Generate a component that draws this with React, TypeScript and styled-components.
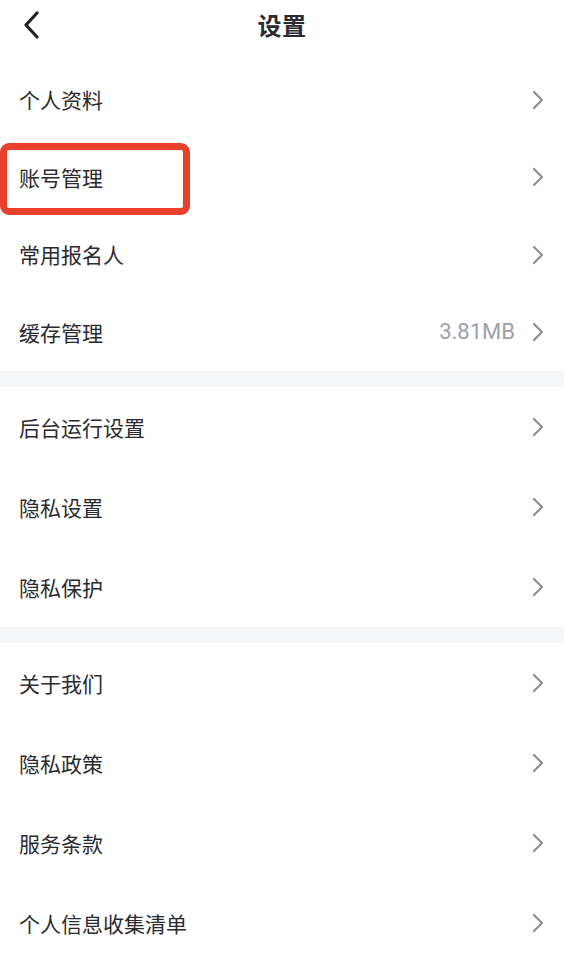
import React from "react";
import styled, { createGlobalStyle } from "styled-components";

const Global = createGlobalStyle`
  html, body { margin: 0; padding: 0; background: #ffffff; }
  body { font-family: "Noto Sans CJK SC", "Noto Sans", "Liberation Sans", sans-serif; -webkit-font-smoothing: antialiased; }
  * { box-sizing: border-box; }
`;

const Page = styled.div`
  width: 564px;
  min-height: 957px;
  background: #ffffff;
  overflow: hidden;
`;

const Header = styled.header`
  height: 50px;
  display: grid;
  grid-template-columns: 60px 1fr 60px;
  align-items: center;
  margin-bottom: 11px;
`;

const BackButton = styled.button`
  border: 0;
  background: none;
  padding: 0 0 0 23px;
  height: 100%;
  display: flex;
  align-items: center;
  cursor: pointer;
`;

const Title = styled.h1`
  margin: 0;
  text-align: center;
  font-size: 24px;
  font-weight: 700;
  color: #2a2a30;
  letter-spacing: 0.5px;
  line-height: 1;
`;

const Group = styled.section`
  display: flex;
  flex-direction: column;
`;

const Divider = styled.div`
  height: 16px;
  background: #f5f6f8;
`;

const Row = styled.div<{ $h: number }>`
  position: relative;
  height: ${(p) => p.$h}px;
  display: flex;
  align-items: center;
  padding: 0 20px 0 19px;
`;

const Label = styled.span`
  flex: 1;
  font-size: 21px;
  font-weight: 400;
  color: #2a2a2f;
  line-height: 1;
`;

const Value = styled.span`
  font-family: "Roboto", "Liberation Sans", sans-serif;
  font-size: 22px;
  font-weight: 400;
  color: #a0a0a8;
  margin-right: 17px;
  line-height: 1;
`;

const Highlight = styled.div`
  position: absolute;
  left: 0;
  top: 4px;
  width: 190px;
  height: 72px;
  border: 7px solid #e9402b;
  border-radius: 9px;
  pointer-events: none;
`;

const Chevron = () => (
  <svg width="12" height="20" viewBox="0 0 12 20" fill="none">
    <path d="M2 2 L10 10 L2 18" stroke="#8d8d9c" strokeWidth="2.2" strokeLinecap="round" strokeLinejoin="round" />
  </svg>
);

const BackIcon = () => (
  <svg width="16" height="28" viewBox="0 0 16 28" fill="none">
    <path d="M14 2 L3 14 L14 26" stroke="#222226" strokeWidth="3.2" strokeLinecap="round" strokeLinejoin="round" />
  </svg>
);

type Item = { label: string; value?: string; highlight?: boolean };

const groups: { h: number; items: Item[] }[] = [
  {
    h: 77.5,
    items: [
      { label: "个人资料" },
      { label: "账号管理", highlight: true },
      { label: "常用报名人" },
      { label: "缓存管理", value: "3.81MB" },
    ],
  },
  {
    h: 80,
    items: [{ label: "后台运行设置" }, { label: "隐私设置" }, { label: "隐私保护" }],
  },
  {
    h: 80,
    items: [
      { label: "关于我们" },
      { label: "隐私政策" },
      { label: "服务条款" },
      { label: "个人信息收集清单" },
    ],
  },
];

export default function App() {
  return (
    <Page>
      <Global />
      <Header>
        <BackButton aria-label="返回">
          <BackIcon />
        </BackButton>
        <Title>设置</Title>
        <span />
      </Header>
      {groups.map((g, gi) => (
        <React.Fragment key={gi}>
          {gi > 0 && <Divider />}
          <Group>
            {g.items.map((it) => (
              <Row key={it.label} $h={g.h}>
                <Label>{it.label}</Label>
                {it.value && <Value>{it.value}</Value>}
                <Chevron />
                {it.highlight && <Highlight />}
              </Row>
            ))}
          </Group>
        </React.Fragment>
      ))}
    </Page>
  );
}
